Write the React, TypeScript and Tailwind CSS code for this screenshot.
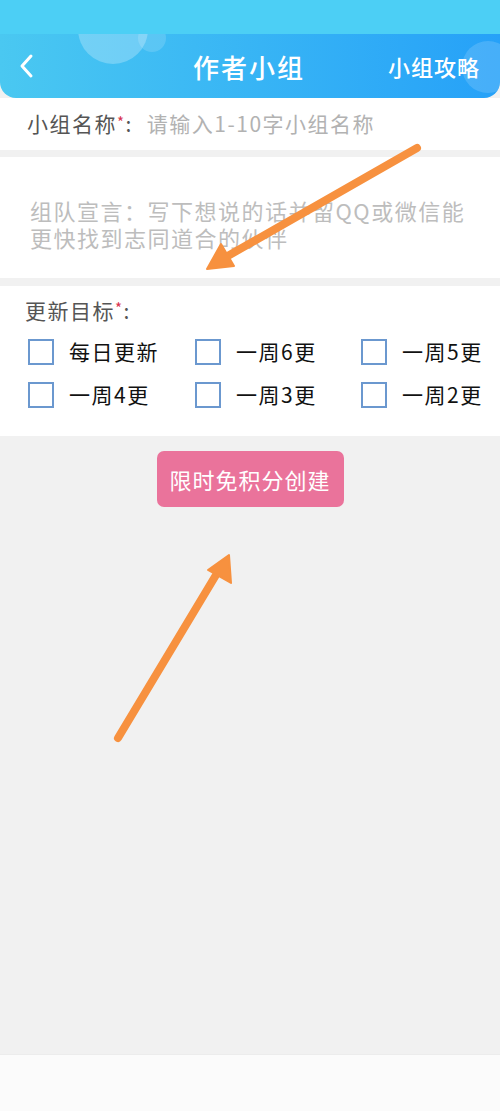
const goals = ["每日更新", "一周6更", "一周5更", "一周4更", "一周3更", "一周2更"];

const Req = () => <span className="text-[#d8334f] text-[15px] align-top relative top-[-2px]">*</span>;

const App = () => {
  return (
    <div
      className="relative w-full min-h-[1111px] flex flex-col bg-[#f1f1f1]"
      style={{ fontFamily: '"Noto Sans CJK SC", "Noto Sans", sans-serif' }}
    >
      {/* status bar */}
      <div className="h-[34px] bg-[#4ccff5]" />

      {/* header */}
      <div className="relative h-[64px] overflow-hidden rounded-b-[16px] bg-linear-to-r from-[#4ac8f1] to-[#26a1f8] grid grid-cols-[1fr_auto_1fr] items-center pl-[18px] pr-[20px]">
        <div className="absolute left-[78px] top-[-40px] w-[70px] h-[70px] rounded-full bg-white/25" />
        <div className="absolute left-[138px] top-[-10px] w-[28px] h-[28px] rounded-full bg-white/15" />
        <div className="absolute left-[462px] top-[7px] w-[52px] h-[52px] rounded-full bg-white/15" />
        <svg width="18" height="26" viewBox="0 0 18 26" className="relative">
          <path d="M13 3 L4 13 L13 23" fill="none" stroke="white" strokeWidth="3" strokeLinecap="round" strokeLinejoin="round" />
        </svg>
        <div className="relative text-center text-white text-[26px] font-medium tracking-[2px]">作者小组</div>
        <div className="relative text-right text-white text-[22px] font-medium tracking-[1px]">小组攻略</div>
      </div>

      {/* name */}
      <div className="h-[52px] bg-white flex items-center px-[27px] text-[21px] tracking-[1.5px]">
        <span className="text-[#555]">小组名称</span>
        <Req />
        <span className="text-[#555] mr-[14px]">:</span>
        <span className="text-[#b2b2b2]">请输入1-10字小组名称</span>
      </div>

      {/* manifesto */}
      <div className="mt-[7px] h-[121px] bg-white px-[30px] pt-[40px] text-[22px] leading-[27px] tracking-[1.5px] text-[#bdbdbd]">
        组队宣言：写下想说的话并留QQ或微信能更快找到志同道合的伙伴
      </div>

      {/* goals */}
      <div className="mt-[8px] bg-white pt-[11px] pb-[28px]">
        <div className="px-[25px] text-[21px] leading-[26px] tracking-[1.5px] text-[#555]">
          更新目标<Req />:
        </div>
        <div className="grid grid-cols-[167px_166px_1fr] gap-y-[17px] pl-[28px] mt-[16px]">
          {goals.map((g) => (
            <div key={g} className="flex items-center gap-[15px] h-[26px]">
              <div className="w-[26px] h-[26px] border-2 border-[#6b98cf]" />
              <span className="text-[21px] tracking-[1.5px] text-[#111]">{g}</span>
            </div>
          ))}
        </div>
      </div>

      {/* button */}
      <div className="flex justify-center mt-[15px]">
        <button className="w-[187px] h-[56px] rounded-[7px] bg-[#ea739b] text-white text-[22px] tracking-[1px]">
          限时免积分创建
        </button>
      </div>

      <div className="flex-1" />

      {/* bottom bar */}
      <div className="h-[57px] bg-[#fbfbfb] border-t border-[#ececec]" />

      {/* annotation arrows */}
      <svg className="absolute left-0 top-0 pointer-events-none" width="500" height="1111">
        <g stroke="#f7913f" strokeWidth="8" strokeLinecap="round" fill="#f7913f">
          <line x1="417" y1="148" x2="226" y2="257" />
          <line x1="118" y1="738" x2="219" y2="570" />
        </g>
        <polygon points="207,269 221,244 234,266" fill="#f7913f" stroke="#f7913f" strokeWidth="2" strokeLinejoin="round" />
        <polygon points="229,555 231,583 208,570" fill="#f7913f" stroke="#f7913f" strokeWidth="2" strokeLinejoin="round" />
      </svg>
    </div>
  );
};

export default App;
